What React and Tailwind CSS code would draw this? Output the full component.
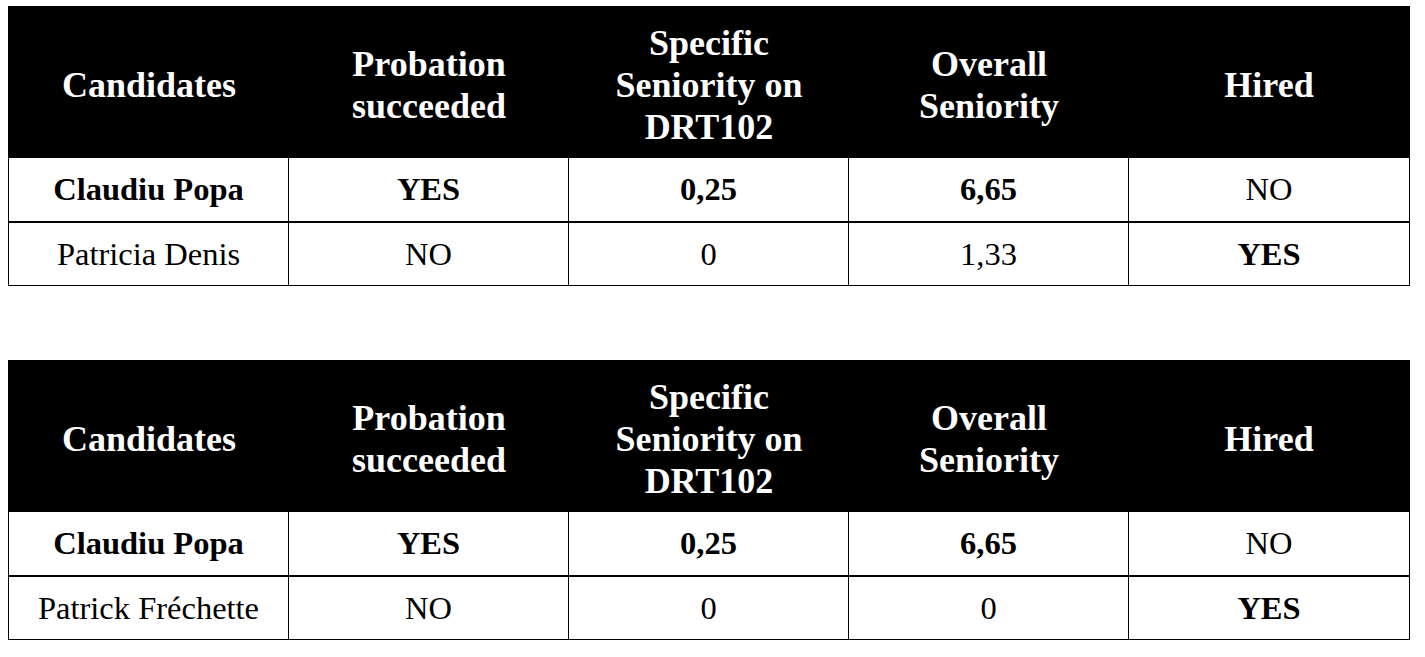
import React from 'react';

const headers = [
  ['Candidates'],
  ['Probation', 'succeeded'],
  ['Specific', 'Seniority on', 'DRT102'],
  ['Overall', 'Seniority'],
  ['Hired'],
];

const tables = [
  [
    [
      { t: 'Claudiu Popa', b: true },
      { t: 'YES', b: true },
      { t: '0,25', b: true },
      { t: '6,65', b: true },
      { t: 'NO' },
    ],
    [
      { t: 'Patricia Denis' },
      { t: 'NO' },
      { t: '0' },
      { t: '1,33' },
      { t: 'YES', b: true },
    ],
  ],
  [
    [
      { t: 'Claudiu Popa', b: true },
      { t: 'YES', b: true },
      { t: '0,25', b: true },
      { t: '6,65', b: true },
      { t: 'NO' },
    ],
    [
      { t: 'Patrick Fréchette' },
      { t: 'NO' },
      { t: '0' },
      { t: '0' },
      { t: 'YES', b: true },
    ],
  ],
];

function Row({ cells, last }) {
  return (
    <div
      className={`grid grid-cols-5 border-black ${
        last ? 'h-[63px] border-b' : 'h-[65px] border-b-2'
      }`}
    >
      {cells.map((c, i) => (
        <div
          key={i}
          className={`flex items-center justify-center border-black text-[32.5px] ${
            c.b ? 'font-bold' : 'font-normal'
          } ${i < 4 ? 'border-r' : ''}`}
        >
          {c.t}
        </div>
      ))}
    </div>
  );
}

function CandidateTable({ rows }) {
  return (
    <div className="w-[1402px] border-x border-black">
      <div className="grid h-[152px] grid-cols-5 items-center bg-black pt-[5px] text-white">
        {headers.map((lines, i) => (
          <div key={i} className="text-center text-[36px] font-bold leading-[42px]">
            {lines.map((l) => (
              <div key={l}>{l}</div>
            ))}
          </div>
        ))}
      </div>
      {rows.map((cells, i) => (
        <Row key={i} cells={cells} last={i === rows.length - 1} />
      ))}
    </div>
  );
}

export default function App() {
  return (
    <div className="flex min-h-[657px] w-[1425px] flex-col gap-[74px] bg-white pl-[8px] pt-[6px] font-['Liberation_Serif','Times_New_Roman',serif] text-black">
      {tables.map((rows, i) => (
        <CandidateTable key={i} rows={rows} />
      ))}
    </div>
  );
}
